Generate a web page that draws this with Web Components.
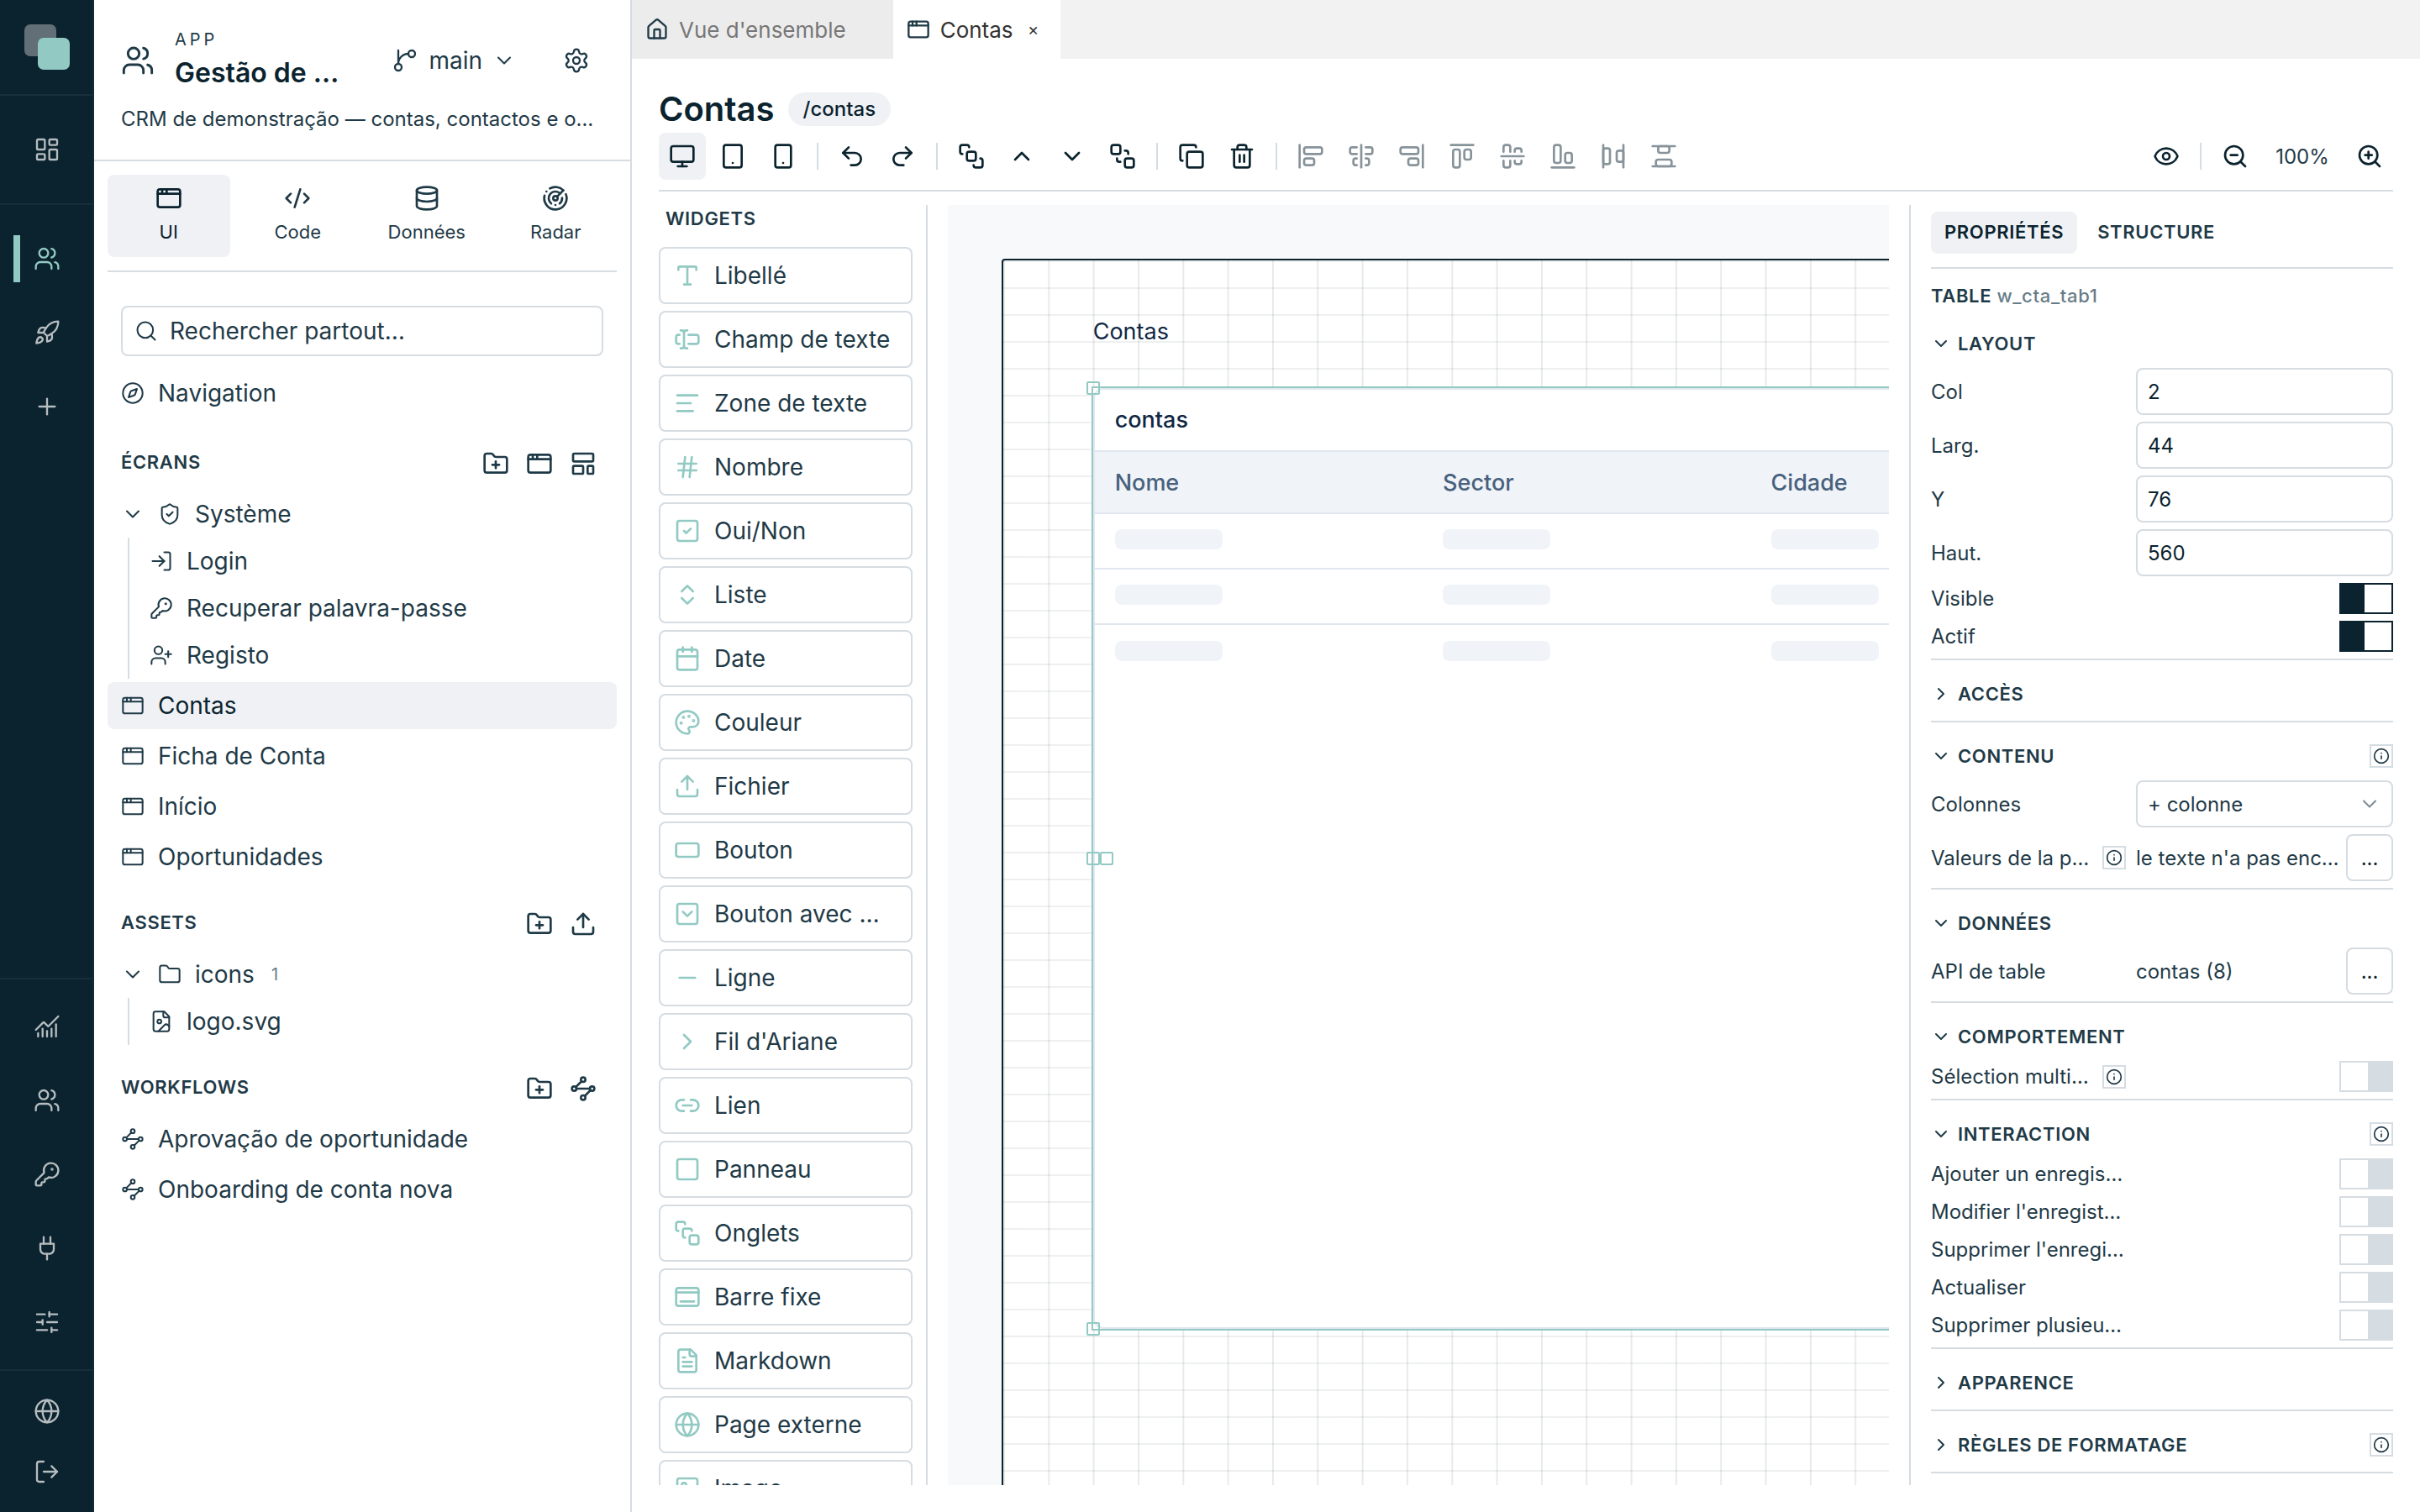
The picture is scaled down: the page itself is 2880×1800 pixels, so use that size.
<!DOCTYPE html>
<html lang="fr">
<head>
<meta charset="utf-8">
<title>Gestão de contas</title>
<style>
    :root{
        --ink: #0b232e;
        --text: #1f3a47;
        --muted: #687c88;
        --line: #d5dce2;
        --soft: #eff1f5;
        --teal: #92cac3;
    }
    body{
        margin: 0;
        height: 100vh;
        overflow: hidden;
        background: #fff;
        color: var(--text);
        font-family: Inter, "Liberation Sans", sans-serif;
        font-size: 28px;
    }
</style>
</head>
<body>
<app-shell></app-shell>
<script>
const ICONS = {
    dashboard: '<rect width="7" height="9" x="3" y="3" rx="1"/><rect width="7" height="5" x="14" y="3" rx="1"/><rect width="7" height="9" x="14" y="12" rx="1"/><rect width="7" height="5" x="3" y="16" rx="1"/>',
    users: '<path d="M16 21v-2a4 4 0 0 0-4-4H6a4 4 0 0 0-4 4v2"/><path d="M16 3.128a4 4 0 0 1 0 7.744"/><path d="M22 21v-2a4 4 0 0 0-3-3.87"/><circle cx="9" cy="7" r="4"/>',
    rocket: '<path d="M4.5 16.5c-1.5 1.26-2 5-2 5s3.74-.5 5-2c.71-.84.7-2.13-.09-2.91a2.18 2.18 0 0 0-2.91-.09z"/><path d="m12 15-3-3a22 22 0 0 1 2-3.95A12.88 12.88 0 0 1 22 2c0 2.72-.78 7.5-6 11a22.35 22.35 0 0 1-4 2z"/><path d="M9 12H4s.55-3.03 2-4c1.62-1.08 5 0 5 0"/><path d="M12 15v5s3.03-.55 4-2c1.08-1.62 0-5 0-5"/>',
    plus: '<path d="M5 12h14"/><path d="M12 5v14"/>',
    chart: '<path d="M12 16v5"/><path d="M16 14v7"/><path d="M20 10v11"/><path d="m22 3-8.646 8.646a.5.5 0 0 1-.708 0L9.354 8.354a.5.5 0 0 0-.707 0L2 15"/><path d="M4 18v3"/><path d="M8 14v7"/>',
    key: '<path d="M2.586 17.414A2 2 0 0 0 2 18.828V21a1 1 0 0 0 1 1h3a1 1 0 0 0 1-1v-1a1 1 0 0 1 1-1h1a1 1 0 0 0 1-1v-1a1 1 0 0 1 1-1h.172a2 2 0 0 0 1.414-.586l.814-.814a6.5 6.5 0 1 0-4-4z"/><circle cx="16.5" cy="7.5" r=".5" fill="currentColor"/>',
    plug: '<path d="M12 22v-5"/><path d="M9 8V2"/><path d="M15 8V2"/><path d="M18 8v5a4 4 0 0 1-4 4h-4a4 4 0 0 1-4-4V8Z"/>',
    sliders: '<path d="M10 5H3"/><path d="M12 19H3"/><path d="M14 3v4"/><path d="M16 17v4"/><path d="M21 12h-9"/><path d="M21 19h-5"/><path d="M21 5h-7"/><path d="M8 10v4"/><path d="M8 12H3"/>',
    globe: '<circle cx="12" cy="12" r="10"/><path d="M12 2a14.5 14.5 0 0 0 0 20 14.5 14.5 0 0 0 0-20"/><path d="M2 12h20"/>',
    logout: '<path d="m16 17 5-5-5-5"/><path d="M21 12H9"/><path d="M9 21H5a2 2 0 0 1-2-2V5a2 2 0 0 1 2-2h4"/>',
    login: '<path d="m10 17 5-5-5-5"/><path d="M15 12H3"/><path d="M15 3h4a2 2 0 0 1 2 2v14a2 2 0 0 1-2 2h-4"/>',
    branch: '<path d="M15 6a9 9 0 0 0-9 9V3"/><circle cx="18" cy="6" r="3"/><circle cx="6" cy="18" r="3"/>',
    settings: '<path d="M9.671 4.136a2.34 2.34 0 0 1 4.659 0 2.34 2.34 0 0 0 3.319 1.915 2.34 2.34 0 0 1 2.33 4.033 2.34 2.34 0 0 0 0 3.831 2.34 2.34 0 0 1-2.33 4.033 2.34 2.34 0 0 0-3.319 1.915 2.34 2.34 0 0 1-4.659 0 2.34 2.34 0 0 0-3.32-1.915 2.34 2.34 0 0 1-2.33-4.033 2.34 2.34 0 0 0 0-3.831A2.34 2.34 0 0 1 6.35 6.051a2.34 2.34 0 0 0 3.319-1.915"/><circle cx="12" cy="12" r="3"/>',
    window: '<rect x="2" y="4" width="20" height="16" rx="2"/><path d="M10 4v4"/><path d="M2 8h20"/><path d="M6 4v4"/>',
    code: '<path d="m18 16 4-4-4-4"/><path d="m6 8-4 4 4 4"/><path d="m14.5 4-5 16"/>',
    database: '<ellipse cx="12" cy="5" rx="9" ry="3"/><path d="M3 5V19A9 3 0 0 0 21 19V5"/><path d="M3 12A9 3 0 0 0 21 12"/>',
    radar: '<path d="M19.07 4.93A10 10 0 0 0 6.99 3.34"/><path d="M4 6h.01"/><path d="M2.29 9.62A10 10 0 1 0 21.31 8.35"/><path d="M16.24 7.76A6 6 0 1 0 8.23 16.67"/><path d="M12 18h.01"/><path d="M17.99 11.66A6 6 0 0 1 15.77 16.67"/><circle cx="12" cy="12" r="2"/><path d="m13.41 10.59 5.66-5.66"/>',
    search: '<path d="m21 21-4.34-4.34"/><circle cx="11" cy="11" r="8"/>',
    compass: '<circle cx="12" cy="12" r="10"/><path d="m16.24 7.76-1.804 5.411a2 2 0 0 1-1.265 1.265L7.76 16.24l1.804-5.411a2 2 0 0 1 1.265-1.265z"/>',
    folder: '<path d="M20 20a2 2 0 0 0 2-2V8a2 2 0 0 0-2-2h-7.9a2 2 0 0 1-1.69-.9L9.6 3.9A2 2 0 0 0 7.93 3H4a2 2 0 0 0-2 2v13a2 2 0 0 0 2 2Z"/>',
    folderPlus: '<path d="M12 10v6"/><path d="M9 13h6"/><path d="M20 20a2 2 0 0 0 2-2V8a2 2 0 0 0-2-2h-7.9a2 2 0 0 1-1.69-.9L9.6 3.9A2 2 0 0 0 7.93 3H4a2 2 0 0 0-2 2v13a2 2 0 0 0 2 2Z"/>',
    template: '<rect width="18" height="7" x="3" y="3" rx="1"/><rect width="9" height="7" x="3" y="14" rx="1"/><rect width="5" height="7" x="16" y="14" rx="1"/>',
    shield: '<path d="M20 13c0 5-3.5 7.5-7.66 8.95a1 1 0 0 1-.67-.01C7.5 20.5 4 18 4 13V6a1 1 0 0 1 1-1c2 0 4.5-1.2 6.24-2.72a1.17 1.17 0 0 1 1.52 0C14.51 3.81 17 5 19 5a1 1 0 0 1 1 1z"/><path d="m9 12 2 2 4-4"/>',
    userPlus: '<path d="M16 21v-2a4 4 0 0 0-4-4H6a4 4 0 0 0-4 4v2"/><circle cx="9" cy="7" r="4"/><path d="M19 8v6"/><path d="M22 11h-6"/>',
    upload: '<path d="M12 3v12"/><path d="m17 8-5-5-5 5"/><path d="M21 15v4a2 2 0 0 1-2 2H5a2 2 0 0 1-2-2v-4"/>',
    fileImage: '<path d="M15 2H6a2 2 0 0 0-2 2v16a2 2 0 0 0 2 2h12a2 2 0 0 0 2-2V7Z"/><path d="M14 2v4a2 2 0 0 0 2 2h4"/><circle cx="10" cy="12" r="2"/><path d="m20 17-1.296-1.296a2.41 2.41 0 0 0-3.408 0L9 22"/>',
    waypoints: '<path d="m10.586 5.414-5.172 5.172"/><path d="m18.586 13.414-5.172 5.172"/><path d="M6 12h12"/><circle cx="12" cy="20" r="2"/><circle cx="12" cy="4" r="2"/><circle cx="20" cy="12" r="2"/><circle cx="4" cy="12" r="2"/>',
    down: '<path d="m6 9 6 6 6-6"/>',
    up: '<path d="m18 15-6-6-6 6"/>',
    right: '<path d="m9 18 6-6-6-6"/>',
    home: '<path d="M15 21v-8a1 1 0 0 0-1-1h-4a1 1 0 0 0-1 1v8"/><path d="M3 10a2 2 0 0 1 .709-1.528l7-5.999a2 2 0 0 1 2.582 0l7 5.999A2 2 0 0 1 21 10v9a2 2 0 0 1-2 2H5a2 2 0 0 1-2-2z"/>',
    monitor: '<rect width="20" height="14" x="2" y="3" rx="2"/><path d="M8 21h8"/><path d="M12 17v4"/>',
    tablet: '<rect width="16" height="20" x="4" y="2" rx="2"/><path d="M12 18h.01"/>',
    phone: '<rect width="14" height="20" x="5" y="2" rx="2"/><path d="M12 18h.01"/>',
    undo: '<path d="M9 14 4 9l5-5"/><path d="M4 9h10.5a5.5 5.5 0 0 1 5.5 5.5a5.5 5.5 0 0 1-5.5 5.5H11"/>',
    redo: '<path d="m15 14 5-5-5-5"/><path d="M20 9H9.500A5.5 5.5 0 0 0 4 14.500A5.5 5.5 0 0 0 9.500 20H13"/>',
    toFront: '<rect x="8" y="8" width="8" height="8" rx="2"/><path d="M4 10a2 2 0 0 1-2-2V4a2 2 0 0 1 2-2h4a2 2 0 0 1 2 2"/><path d="M14 20a2 2 0 0 0 2 2h4a2 2 0 0 0 2-2v-4a2 2 0 0 0-2-2"/>',
    toBack: '<rect x="14" y="14" width="8" height="8" rx="2"/><rect x="2" y="2" width="8" height="8" rx="2"/><path d="M7 14v1a2 2 0 0 0 2 2h1"/><path d="M14 7h1a2 2 0 0 1 2 2v1"/>',
    copy: '<rect width="14" height="14" x="8" y="8" rx="2"/><path d="M4 16c-1.1 0-2-.9-2-2V4c0-1.1.9-2 2-2h10c1.1 0 2 .9 2 2"/>',
    trash: '<path d="M10 11v6"/><path d="M14 11v6"/><path d="M19 6v14a2 2 0 0 1-2 2H7a2 2 0 0 1-2-2V6"/><path d="M3 6h18"/><path d="M8 6V4a2 2 0 0 1 2-2h4a2 2 0 0 1 2 2v2"/>',
    alignLeft: '<rect width="9" height="6" x="6" y="14" rx="2"/><rect width="16" height="6" x="6" y="4" rx="2"/><path d="M2 2v20"/>',
    alignCenter: '<path d="M12 2v20"/><path d="M8 10H4a2 2 0 0 1-2-2V6c0-1.1.9-2 2-2h4"/><path d="M16 10h4a2 2 0 0 0 2-2V6a2 2 0 0 0-2-2h-4"/><path d="M8 20H7a2 2 0 0 1-2-2v-2c0-1.1.9-2 2-2h1"/><path d="M16 14h1a2 2 0 0 1 2 2v2a2 2 0 0 1-2 2h-1"/>',
    alignRight: '<rect width="16" height="6" x="2" y="4" rx="2"/><rect width="9" height="6" x="9" y="14" rx="2"/><path d="M22 22V2"/>',
    alignTop: '<rect width="6" height="16" x="4" y="6" rx="2"/><rect width="6" height="9" x="14" y="6" rx="2"/><path d="M22 2H2"/>',
    alignMiddle: '<path d="M2 12h20"/><path d="M10 16v4a2 2 0 0 1-2 2H6a2 2 0 0 1-2-2v-4"/><path d="M10 8V4a2 2 0 0 0-2-2H6a2 2 0 0 0-2 2v4"/><path d="M20 16v1a2 2 0 0 1-2 2h-2a2 2 0 0 1-2-2v-1"/><path d="M14 8V7c0-1.1.9-2 2-2h2a2 2 0 0 1 2 2v1"/>',
    alignBottom: '<rect width="6" height="16" x="4" y="2" rx="2"/><rect width="6" height="9" x="14" y="9" rx="2"/><path d="M22 22H2"/>',
    spaceX: '<rect width="6" height="14" x="3" y="5" rx="2"/><rect width="6" height="10" x="15" y="7" rx="2"/><path d="M3 2v20"/><path d="M21 2v20"/>',
    spaceY: '<rect width="14" height="6" x="5" y="15" rx="2"/><rect width="10" height="6" x="7" y="3" rx="2"/><path d="M2 21h20"/><path d="M2 3h20"/>',
    eye: '<path d="M2.062 12.348a1 1 0 0 1 0-.696 10.75 10.75 0 0 1 19.876 0 1 1 0 0 1 0 .696 10.75 10.75 0 0 1-19.876 0"/><circle cx="12" cy="12" r="3"/>',
    zoomOut: '<circle cx="11" cy="11" r="8"/><path d="m21 21-4.350-4.350"/><path d="M8 11h6"/>',
    zoomIn: '<circle cx="11" cy="11" r="8"/><path d="m21 21-4.350-4.350"/><path d="M8 11h6"/><path d="M11 8v6"/>',
    type: '<path d="M12 4v16"/><path d="M4 7V5a1 1 0 0 1 1-1h14a1 1 0 0 1 1 1v2"/><path d="M9 20h6"/>',
    input: '<path d="M12 20h-1a2 2 0 0 1-2-2 2 2 0 0 1-2 2H6"/><path d="M13 8h7a2 2 0 0 1 2 2v4a2 2 0 0 1-2 2h-7"/><path d="M5 16H4a2 2 0 0 1-2-2v-4a2 2 0 0 1 2-2h1"/><path d="M6 4h1a2 2 0 0 1 2 2 2 2 0 0 1 2-2h1"/><path d="M9 6v12"/>',
    text: '<path d="M21 5H3"/><path d="M15 12H3"/><path d="M17 19H3"/>',
    hash: '<path d="M4 9h16"/><path d="M4 15h16"/><path d="M10 3 8 21"/><path d="m16 3-2 18"/>',
    check: '<rect width="18" height="18" x="3" y="3" rx="2"/><path d="m9 12 2 2 4-4"/>',
    upDown: '<path d="m7 15 5 5 5-5"/><path d="m7 9 5-5 5 5"/>',
    calendar: '<path d="M8 2v4"/><path d="M16 2v4"/><rect width="18" height="18" x="3" y="4" rx="2"/><path d="M3 10h18"/>',
    palette: '<path d="M12 22a1 1 0 0 1 0-20 10 9 0 0 1 10 9 5 5 0 0 1-5 5h-2.250a1.750 1.750 0 0 0-1.400 2.800l.3.4a1.750 1.750 0 0 1-1.400 2.800z"/><g fill="currentColor"><circle cx="13.5" cy="6.5" r=".5"/><circle cx="17.5" cy="10.5" r=".5"/><circle cx="6.5" cy="12.5" r=".5"/><circle cx="8.5" cy="7.5" r=".5"/></g>',
    button: '<rect width="20" height="12" x="2" y="6" rx="2"/>',
    menuButton: '<rect width="18" height="18" x="3" y="3" rx="2"/><path d="m16 10-4 4-4-4"/>',
    minus: '<path d="M5 12h14"/>',
    link: '<path d="M9 17H7A5 5 0 0 1 7 7h2"/><path d="M15 7h2a5 5 0 1 1 0 10h-2"/><path d="M8 12h8"/>',
    square: '<rect width="18" height="18" x="3" y="3" rx="2"/>',
    stack: '<path d="M4 10c-1.1 0-2-.9-2-2V4c0-1.1.9-2 2-2h4c1.1 0 2 .9 2 2"/><path d="M10 16c-1.1 0-2-.9-2-2v-4c0-1.1.9-2 2-2h4c1.1 0 2 .9 2 2"/><rect width="8" height="8" x="14" y="14" rx="2"/>',
    dock: '<path d="M2 8h20"/><rect width="20" height="16" x="2" y="4" rx="2"/><path d="M6 16h12"/>',
    fileText: '<path d="M15 2H6a2 2 0 0 0-2 2v16a2 2 0 0 0 2 2h12a2 2 0 0 0 2-2V7Z"/><path d="M14 2v4a2 2 0 0 0 2 2h4"/><path d="M10 9H8"/><path d="M16 13H8"/><path d="M16 17H8"/>',
    image: '<rect width="18" height="18" x="3" y="3" rx="2"/><circle cx="9" cy="9" r="2"/><path d="m21 15-3.086-3.086a2 2 0 0 0-2.828 0L6 21"/>',
    info: '<circle cx="12" cy="12" r="10"/><path d="M12 16v-4"/><path d="M12 8h.01"/>'
}

// shared by every shadow root
const RESET = `
    *{ box-sizing: border-box; }
    button{
        margin: 0;
        padding: 0;
        border: 0;
        background: none;
        color: inherit;
        font: inherit;
        cursor: pointer;
    }
    a{ color: inherit; text-decoration: none; }
    input, select{ margin: 0; color: inherit; font: inherit; }
    h1, h2, h3, p{ margin: 0; font-weight: 400; }
`

class UiIcon extends HTMLElement{
    constructor(){
        super()
        this.attachShadow({mode:"open"})
    }
    connectedCallback(){
        const size = this.getAttribute("size") || 28
        const weight = this.getAttribute("weight") || 1.75
        this.shadowRoot.innerHTML = `
        <style>
            :host{ display: block; flex: none; width: ${size}px; height: ${size}px; }
            svg{ display: block; width: 100%; height: 100%; }
        </style>
        <svg viewBox="0 0 24 24" fill="none" stroke="currentColor" stroke-width="${weight}" stroke-linecap="round" stroke-linejoin="round" aria-hidden="true">${ICONS[this.getAttribute("name")]}</svg>
        `
    }
}
customElements.define('ui-icon', UiIcon)

class AppRail extends HTMLElement{
    constructor(){
        super()
        this.attachShadow({mode:"open"})
        const link = (icon, label, cls = "") => `<a href="#" class="${cls}" aria-label="${label}"><ui-icon name="${icon}" size="32"></ui-icon></a>`
        this.shadowRoot.innerHTML = `
        <style>
            ${RESET}
            :host{
                display: flex;
                flex-direction: column;
                background: var(--ink);
                border-right: 2px solid #122d39;
                color: #b6bdc0;
            }
            nav{
                display: flex;
                flex-direction: column;
                gap: 32px;
                padding: 36px 0;
                border-top: 2px solid #162f3a;
            }
            .logo{ height: 112px; padding: 29px; }
            .logo svg{ display: block; width: 54px; height: 54px; }
            .tools{ margin-top: auto; padding: 28px 0; }
            .session{ gap: 16px; padding: 20px 0; }
            a{
                display: flex;
                align-items: center;
                justify-content: center;
                height: 56px;
                padding-left: 2px;
            }
            .active{
                color: var(--teal);
                background: linear-gradient(var(--teal), var(--teal)) 16px 0 / 8px 100% no-repeat;
            }
        </style>
        <div class="logo">
            <svg viewBox="0 0 54 54"><rect width="38" height="38" rx="7" fill="#636f76"/><rect x="16" y="16" width="38" height="38" rx="7" fill="#92cac3"/></svg>
        </div>
        <nav>${link("dashboard", "Tableau de bord")}</nav>
        <nav>
            ${link("users", "Gestão de contas", "active")}
            ${link("rocket", "Onboarding")}
            ${link("plus", "Nouvelle app")}
        </nav>
        <nav class="tools">
            ${link("chart", "Statistiques")}
            ${link("users", "Utilisateurs")}
            ${link("key", "Accès")}
            ${link("plug", "Connecteurs")}
            ${link("sliders", "Réglages")}
        </nav>
        <nav class="session">
            ${link("globe", "Langue")}
            ${link("logout", "Quitter")}
        </nav>
        `
    }
}
customElements.define('app-rail', AppRail)

// one row of the sidebar tree; attributes: icon, open, active, nested, count
class TreeItem extends HTMLElement{
    constructor(){
        super()
        this.attachShadow({mode:"open"})
    }
    connectedCallback(){
        const count = this.getAttribute("count")
        this.shadowRoot.innerHTML = `
        <style>
            ${RESET}
            :host{ display: block; }
            a{
                display: flex;
                align-items: center;
                gap: 16px;
                height: 56px;
                padding: 0 16px;
                border-radius: 8px;
                white-space: nowrap;
            }
            :host([active]) a{ background: var(--soft); color: var(--ink); }
            :host([active]) ui-icon{ color: var(--text); }
            :host([nested]) a{ padding-left: 24px; }
            small{ padding-left: 4px; font-size: 20px; color: var(--muted); }
        </style>
        <a href="#">
            ${this.hasAttribute("open") ? '<ui-icon name="down"></ui-icon>' : ''}
            <ui-icon name="${this.getAttribute("icon")}"></ui-icon>
            <span><slot></slot></span>
            ${count ? `<small>${count}</small>` : ''}
        </a>
        `
    }
}
customElements.define('tree-item', TreeItem)

class TreeGroup extends HTMLElement{
    constructor(){
        super()
        this.attachShadow({mode:"open"})
    }
    connectedCallback(){
        const actions = this.getAttribute("actions").split(" ")
        this.shadowRoot.innerHTML = `
        <style>
            ${RESET}
            :host{ display: block; margin-top: 28px; }
            header{
                display: flex;
                align-items: center;
                gap: 4px;
                height: 48px;
                margin: 0 16px 8px;
            }
            h2{
                flex: 1;
                padding-bottom: 4px;
                font-size: 22px;
                font-weight: 600;
                letter-spacing: 0.03em;
            }
            button{ display: grid; place-items: center; width: 48px; height: 48px; }
            section{ display: grid; gap: 4px; }
        </style>
        <header>
            <h2>${this.getAttribute("label")}</h2>
            ${actions.map(a => `<button type="button" aria-label="${a}"><ui-icon name="${a}" size="32" weight="2"></ui-icon></button>`).join("")}
        </header>
        <section><slot></slot></section>
        `
    }
}
customElements.define('tree-group', TreeGroup)

class AppSidebar extends HTMLElement{
    constructor(){
        super()
        this.attachShadow({mode:"open"})
        const tab = (icon, label, cls = "") => `<button type="button" class="${cls}"><ui-icon name="${icon}" size="32" weight="2"></ui-icon>${label}</button>`
        this.shadowRoot.innerHTML = `
        <style>
            ${RESET}
            :host{ display: block; border-right: 2px solid var(--line); }
            .head{ padding: 32px 32px 30px; border-bottom: 2px solid var(--line); }
            .app{ display: flex; align-items: center; }
            .name{ flex: 1; margin-left: 24px; }
            .name small{
                display: block;
                font-size: 20px;
                line-height: 30px;
                letter-spacing: 0.2em;
            }
            h1{ font-size: 32px; line-height: 50px; font-weight: 600; color: var(--ink); white-space: nowrap; }
            .branch{ display: flex; align-items: center; gap: 12px; margin-right: 40px; }
            .gear{ display: grid; place-items: center; width: 64px; height: 64px; }
            .about{ margin-top: 12px; font-size: 24px; line-height: 36px; white-space: nowrap; }
            .body{ padding: 16px 16px 0; }
            .tabs{
                display: grid;
                grid-template-columns: repeat(4, 1fr);
                gap: 8px;
                padding-bottom: 16px;
                border-bottom: 2px solid var(--line);
            }
            .tabs button{
                display: flex;
                flex-direction: column;
                align-items: center;
                gap: 8px;
                padding: 12px 0 14px;
                border-radius: 8px;
                font-size: 22px;
                line-height: 32px;
            }
            .tabs .active{ background: var(--soft); color: var(--ink); }
            .search{
                display: flex;
                align-items: center;
                gap: 14px;
                height: 60px;
                margin: 40px 16px 16px;
                padding: 0 14px;
                border: 2px solid var(--line);
                border-radius: 8px;
            }
            .search input{ flex: 1; min-width: 0; padding: 0; border: 0; outline: 0; }
            .search input::placeholder{ color: var(--text); opacity: 1; }
            .nav{ margin-bottom: 32px; }
            .branchline{ margin-left: 24px; border-left: 2px solid var(--line); }
        </style>
        <div class="head">
            <div class="app">
                <ui-icon name="users" size="40"></ui-icon>
                <div class="name"><small>APP</small><h1>Gestão de …</h1></div>
                <button type="button" class="branch"><ui-icon name="branch" size="32"></ui-icon>main<ui-icon name="down"></ui-icon></button>
                <button type="button" class="gear" aria-label="Réglages"><ui-icon name="settings" size="32"></ui-icon></button>
            </div>
            <p class="about">CRM de demonstração — contas, contactos e o…</p>
        </div>
        <div class="body">
            <div class="tabs">
                ${tab("window", "UI", "active")}
                ${tab("code", "Code")}
                ${tab("database", "Données")}
                ${tab("radar", "Radar")}
            </div>
            <label class="search">
                <ui-icon name="search"></ui-icon>
                <input type="search" placeholder="Rechercher partout…" aria-label="Rechercher partout">
            </label>
            <tree-item icon="compass" class="nav">Navigation</tree-item>
            <tree-group label="ÉCRANS" actions="folderPlus window template">
                <div>
                    <tree-item icon="shield" open>Système</tree-item>
                    <div class="branchline">
                        <tree-item icon="login" nested>Login</tree-item>
                        <tree-item icon="key" nested>Recuperar palavra-passe</tree-item>
                        <tree-item icon="userPlus" nested>Registo</tree-item>
                    </div>
                </div>
                <tree-item icon="window" active>Contas</tree-item>
                <tree-item icon="window">Ficha de Conta</tree-item>
                <tree-item icon="window">Início</tree-item>
                <tree-item icon="window">Oportunidades</tree-item>
            </tree-group>
            <tree-group label="ASSETS" actions="folderPlus upload">
                <div>
                    <tree-item icon="folder" open count="1">icons</tree-item>
                    <div class="branchline">
                        <tree-item icon="fileImage" nested>logo.svg</tree-item>
                    </div>
                </div>
            </tree-group>
            <tree-group label="WORKFLOWS" actions="folderPlus waypoints">
                <tree-item icon="waypoints">Aprovação de oportunidade</tree-item>
                <tree-item icon="waypoints">Onboarding de conta nova</tree-item>
            </tree-group>
        </div>
        `
    }
}
customElements.define('app-sidebar', AppSidebar)

class DocTabs extends HTMLElement{
    constructor(){
        super()
        this.attachShadow({mode:"open"})
        this.shadowRoot.innerHTML = `
        <style>
            ${RESET}
            :host{ display: flex; height: 70px; background: #f2f2f2; font-size: 26px; }
            div{
                display: flex;
                align-items: center;
                gap: 12px;
                padding: 0 20px 0 16px;
                background: #ececec;
            }
            ui-icon{ color: var(--text); }
            a{ color: #777; }
            .active{ background: #fff; }
            .active a{ color: #333; }
            span, button{ width: 24px; font-size: 20px; color: #333; }
        </style>
        <div><ui-icon name="home" weight="2"></ui-icon><a href="#">Vue d'ensemble</a><span></span></div>
        <div class="active"><ui-icon name="window" weight="2"></ui-icon><a href="#">Contas</a><button type="button" aria-label="Fermer">×</button></div>
        `
    }
}
customElements.define('doc-tabs', DocTabs)

class EditorToolbar extends HTMLElement{
    constructor(){
        super()
        this.attachShadow({mode:"open"})
        const group = (names, attrs = "") => names.split(" ").map(n => `<button type="button" aria-label="${n}" ${attrs}><ui-icon name="${n}" size="32" weight="2"></ui-icon></button>`).join("")
        this.shadowRoot.innerHTML = `
        <style>
            ${RESET}
            :host{
                display: flex;
                align-items: center;
                gap: 4px;
                padding-bottom: 12px;
                border-bottom: 2px solid var(--line);
                color: var(--ink);
            }
            button{ display: grid; place-items: center; width: 56px; height: 56px; border-radius: 8px; }
            button:disabled{ color: #87939a; }
            .active{ background: var(--soft); }
            i{ width: 2px; height: 32px; margin: 0 8px; background: var(--line); }
            .space{ flex: 1; }
            output{ width: 96px; font-size: 24px; text-align: center; color: var(--text); }
        </style>
        ${group("monitor", 'class="active"')}${group("tablet phone")}<i></i>
        ${group("undo redo")}<i></i>
        ${group("toFront up down toBack")}<i></i>
        ${group("copy trash")}<i></i>
        ${group("alignLeft alignCenter alignRight alignTop alignMiddle alignBottom spaceX spaceY", "disabled")}
        <div class="space"></div>
        ${group("eye")}<i></i>
        ${group("zoomOut")}<output>100%</output>${group("zoomIn")}
        `
    }
}
customElements.define('editor-toolbar', EditorToolbar)

class WidgetPalette extends HTMLElement{
    constructor(){
        super()
        this.attachShadow({mode:"open"})
        const widgets = [
            ["type", "Libellé"], ["input", "Champ de texte"], ["text", "Zone de texte"],
            ["hash", "Nombre"], ["check", "Oui/Non"], ["upDown", "Liste"],
            ["calendar", "Date"], ["palette", "Couleur"], ["upload", "Fichier"],
            ["button", "Bouton"], ["menuButton", "Bouton avec …"], ["minus", "Ligne"],
            ["right", "Fil d'Ariane"], ["link", "Lien"], ["square", "Panneau"],
            ["stack", "Onglets"], ["dock", "Barre fixe"], ["fileText", "Markdown"],
            ["globe", "Page externe"], ["image", "Image"]
        ]
        this.shadowRoot.innerHTML = `
        <style>
            ${RESET}
            :host{
                display: block;
                overflow: hidden;
                padding-right: 16px;
                border-right: 2px solid var(--line);
            }
            h2{
                padding: 0 8px;
                margin-bottom: 18px;
                font-size: 22px;
                line-height: 32px;
                font-weight: 600;
                letter-spacing: 0.03em;
            }
            div{ display: grid; gap: 8px; }
            button{
                display: flex;
                align-items: center;
                gap: 16px;
                height: 68px;
                padding: 0 16px;
                border: 2px solid var(--line);
                border-radius: 8px;
                white-space: nowrap;
            }
            ui-icon{ color: var(--teal); }
        </style>
        <h2>WIDGETS</h2>
        <div>${widgets.map(([icon, label]) => `<button type="button"><ui-icon name="${icon}" size="32" weight="2"></ui-icon>${label}</button>`).join("")}</div>
        `
    }
}
customElements.define('widget-palette', WidgetPalette)

// the screen being edited: a 48-column board, with widgets placed on it
class DesignCanvas extends HTMLElement{
    constructor(){
        super()
        this.attachShadow({mode:"open"})
        const row = `<tr>${'<td><i></i></td>'.repeat(6)}</tr>`
        this.shadowRoot.innerHTML = `
        <style>
            ${RESET}
            :host{
                display: block;
                overflow: hidden;
                padding: 64px 0 0 64px;
                background: #f8f9fb;
                color: #0f2744;
                font-size: 27px;
            }
            .board{
                position: relative;
                box-sizing: content-box;
                width: 2560px;
                height: 1800px;
                border: 2px solid var(--ink);
                border-radius: 4px;
                background:
                    linear-gradient(90deg, #0b232e18 2px, transparent 2px) 0 0 / calc(100% / 48) 100%,
                    linear-gradient(#0b232e12 2px, transparent 2px) 0 0 / 100% 32px,
                    #fff;
            }
            .label, .selection{ position: absolute; left: calc(100% * 2 / 48); }
            .label{ top: 64px; line-height: 42px; }
            .selection{
                top: 152px;
                width: calc(100% * 44 / 48);
                height: 1120px;
                outline: 2px solid var(--teal);
                background: #fff;
            }
            .frame{
                height: 100%;
                overflow: hidden;
                border: 2px solid #e1e7f0;
                border-radius: 12px;
            }
            h3{ padding: 0 24px; font-size: 27px; line-height: 72px; font-weight: 500; }
            table{ width: 100%; table-layout: fixed; border-collapse: separate; border-spacing: 0; }
            th{
                height: 76px;
                padding: 0 24px;
                border: solid #e1e7f0;
                border-width: 2px 0;
                background: #f0f3f8;
                color: #47617d;
                font-weight: 500;
                text-align: left;
            }
            td{ height: 66px; padding: 18px 24px 22px; border-bottom: 2px solid #e1e7f0; }
            tr:last-child td{ border-bottom: 0; }
            td i{ display: block; width: 128px; height: 24px; border-radius: 8px; background: #f0f3f8; }
            .handle{
                position: absolute;
                left: -8px;
                width: 16px;
                height: 16px;
                border: 2px solid var(--teal);
                border-radius: 2px;
            }
            .top{ top: -8px; }
            .middle{ top: calc(50% - 8px); }
            .bottom{ bottom: -8px; }
            .inner{ left: 8px; }
        </style>
        <div class="board">
            <div class="label">Contas</div>
            <div class="selection">
                <div class="frame">
                    <h3>contas</h3>
                    <table>
                        <thead><tr><th>Nome</th><th>Sector</th><th>Cidade</th><th></th><th></th><th></th></tr></thead>
                        <tbody>${row.repeat(3)}</tbody>
                    </table>
                </div>
                <span class="handle top"></span>
                <span class="handle middle"></span>
                <span class="handle middle inner"></span>
                <span class="handle bottom"></span>
            </div>
        </div>
        `
    }
}
customElements.define('design-canvas', DesignCanvas)

class InfoButton extends HTMLElement{
    constructor(){
        super()
        this.attachShadow({mode:"open"})
        this.shadowRoot.innerHTML = `
        <style>
            ${RESET}
            :host{ display: block; flex: none; }
            button{
                display: grid;
                place-items: center;
                width: 28px;
                height: 28px;
                border: 2px solid var(--line);
            }
        </style>
        <button type="button" aria-label="Aide"><ui-icon name="info" size="20" weight="2"></ui-icon></button>
        `
    }
}
customElements.define('info-button', InfoButton)

// attributes: type (input, switch, select, pick), label, value, info, on
class PropRow extends HTMLElement{
    constructor(){
        super()
        this.attachShadow({mode:"open"})
    }
    connectedCallback(){
        const value = this.getAttribute("value")
        const fields = {
            input: () => `<input id="field" type="text" value="${value}">`,
            switch: () => `<input id="field" type="checkbox" role="switch" ${this.hasAttribute("on") ? "checked" : ""}>`,
            select: () => `<div class="select"><select id="field"><option>${value}</option></select><ui-icon name="down"></ui-icon></div>`,
            pick: () => `<span class="value">${value}</span><button type="button" id="field">...</button>`
        }
        this.shadowRoot.innerHTML = `
        <style>
            ${RESET}
            :host{
                display: grid;
                grid-template-columns: 232px 1fr;
                gap: 12px;
                align-items: center;
                min-height: 37px;
                white-space: nowrap;
            }
            .name{ display: flex; align-items: center; justify-content: space-between; }
            .field{ display: flex; align-items: center; justify-content: flex-end; gap: 8px; }
            input[type=text], select, button{
                height: 56px;
                border: 2px solid var(--line);
                border-radius: 8px;
                background: #fff;
            }
            input[type=text]{ width: 100%; padding: 0 12px; color: var(--ink); }
            .select{ display: grid; flex: 1; align-items: center; }
            .select > *{ grid-area: 1 / 1; }
            select{ width: 100%; padding: 0 12px; appearance: none; }
            .select ui-icon{ justify-self: end; margin-right: 14px; color: #7d8c95; pointer-events: none; }
            button{ width: 56px; color: var(--ink); }
            .value{ flex: 1; }
            input[type=checkbox]{
                width: 64px;
                height: 37px;
                border: 2px solid var(--line);
                border-radius: 0;
                background: linear-gradient(90deg, #fff 32px, var(--line) 32px);
                appearance: none;
            }
            input[type=checkbox]:checked{
                border-color: var(--ink);
                background: linear-gradient(90deg, var(--ink) 28px, #fff 28px);
            }
        </style>
        <div class="name">
            <label for="field">${this.getAttribute("label")}</label>
            ${this.hasAttribute("info") ? "<info-button></info-button>" : ""}
        </div>
        <div class="field">${fields[this.getAttribute("type")]()}</div>
        `
    }
}
customElements.define('prop-row', PropRow)

class PropSection extends HTMLElement{
    constructor(){
        super()
        this.attachShadow({mode:"open"})
    }
    connectedCallback(){
        const open = this.hasAttribute("open")
        this.shadowRoot.innerHTML = `
        <style>
            ${RESET}
            :host{ display: block; padding: 21px 0 14px; border-bottom: 2px solid var(--line); }
            :host([open]){ padding-bottom: 8px; }
            header{ display: flex; align-items: center; justify-content: space-between; height: 37px; }
            button{
                display: flex;
                align-items: center;
                gap: 8px;
                font-size: 22px;
                font-weight: 600;
                letter-spacing: 0.03em;
            }
            div{ display: grid; gap: 8px; margin-top: 11px; }
        </style>
        <header>
            <button type="button" aria-expanded="${open}"><ui-icon name="${open ? "down" : "right"}" size="24" weight="2"></ui-icon>${this.getAttribute("label")}</button>
            ${this.hasAttribute("info") ? "<info-button></info-button>" : ""}
        </header>
        ${open ? "<div><slot></slot></div>" : ""}
        `
    }
}
customElements.define('prop-section', PropSection)

class PropPanel extends HTMLElement{
    constructor(){
        super()
        this.attachShadow({mode:"open"})
        this.shadowRoot.innerHTML = `
        <style>
            ${RESET}
            :host{
                display: block;
                overflow: hidden;
                padding: 8px 0 0 24px;
                border-left: 2px solid var(--line);
                font-size: 24px;
            }
            .tabs{
                display: flex;
                gap: 8px;
                padding-bottom: 16px;
                border-bottom: 2px solid var(--line);
            }
            .tabs button{
                height: 50px;
                padding: 0 16px 2px;
                border-radius: 8px;
                font-size: 22px;
                font-weight: 600;
                letter-spacing: 0.03em;
            }
            .tabs .active{ background: var(--soft); color: var(--ink); }
            h2{
                padding-top: 15px;
                font-size: 22px;
                line-height: 34px;
                font-weight: 600;
                letter-spacing: 0.03em;
            }
            h2 span{ color: var(--muted); font-weight: 500; }
        </style>
        <div class="tabs">
            <button type="button" class="active">PROPRIÉTÉS</button>
            <button type="button">STRUCTURE</button>
        </div>
        <h2>TABLE <span>w_cta_tab1</span></h2>
        <prop-section label="LAYOUT" open>
            <prop-row type="input" label="Col" value="2"></prop-row>
            <prop-row type="input" label="Larg." value="44"></prop-row>
            <prop-row type="input" label="Y" value="76"></prop-row>
            <prop-row type="input" label="Haut." value="560"></prop-row>
            <prop-row type="switch" label="Visible" on></prop-row>
            <prop-row type="switch" label="Actif" on></prop-row>
        </prop-section>
        <prop-section label="ACCÈS"></prop-section>
        <prop-section label="CONTENU" info open>
            <prop-row type="select" label="Colonnes" value="+ colonne"></prop-row>
            <prop-row type="pick" label="Valeurs de la p…" value="le texte n'a pas enc…" info></prop-row>
        </prop-section>
        <prop-section label="DONNÉES" open>
            <prop-row type="pick" label="API de table" value="contas (8)"></prop-row>
        </prop-section>
        <prop-section label="COMPORTEMENT" open>
            <prop-row type="switch" label="Sélection multi…" info></prop-row>
        </prop-section>
        <prop-section label="INTERACTION" info open>
            <prop-row type="switch" label="Ajouter un enregis…"></prop-row>
            <prop-row type="switch" label="Modifier l'enregist…"></prop-row>
            <prop-row type="switch" label="Supprimer l'enregi…"></prop-row>
            <prop-row type="switch" label="Actualiser"></prop-row>
            <prop-row type="switch" label="Supprimer plusieu…"></prop-row>
        </prop-section>
        <prop-section label="APPARENCE"></prop-section>
        <prop-section label="RÈGLES DE FORMATAGE" info></prop-section>
        `
    }
}
customElements.define('prop-panel', PropPanel)

class AppShell extends HTMLElement{
    constructor(){
        super()
        this.attachShadow({mode:"open"})
        this.shadowRoot.innerHTML = `
        <style>
            ${RESET}
            :host{
                display: grid;
                grid-template-columns: 112px 640px minmax(0, 1fr);
                height: 100vh;
            }
            main{ display: flex; flex-direction: column; min-height: 0; }
            .editor{
                display: flex;
                flex-direction: column;
                flex: 1;
                min-height: 0;
                padding: 36px 32px 32px;
            }
            .title{ display: flex; align-items: center; gap: 16px; margin-bottom: 4px; color: var(--ink); }
            h1{ font-size: 40px; line-height: 48px; font-weight: 600; }
            .title span{
                padding: 0 18px;
                border-radius: 20px;
                background: var(--soft);
                font-size: 24px;
                line-height: 40px;
                font-weight: 500;
            }
            .panes{
                display: grid;
                grid-template-columns: 320px minmax(0, 1fr) 576px;
                gap: 24px;
                flex: 1;
                min-height: 0;
                margin-top: 16px;
            }
        </style>
        <app-rail></app-rail>
        <app-sidebar></app-sidebar>
        <main>
            <doc-tabs></doc-tabs>
            <div class="editor">
                <div class="title"><h1>Contas</h1><span>/contas</span></div>
                <editor-toolbar></editor-toolbar>
                <div class="panes">
                    <widget-palette></widget-palette>
                    <design-canvas></design-canvas>
                    <prop-panel></prop-panel>
                </div>
            </div>
        </main>
        `
    }
}
customElements.define('app-shell', AppShell)
</script>
</body>
</html>
